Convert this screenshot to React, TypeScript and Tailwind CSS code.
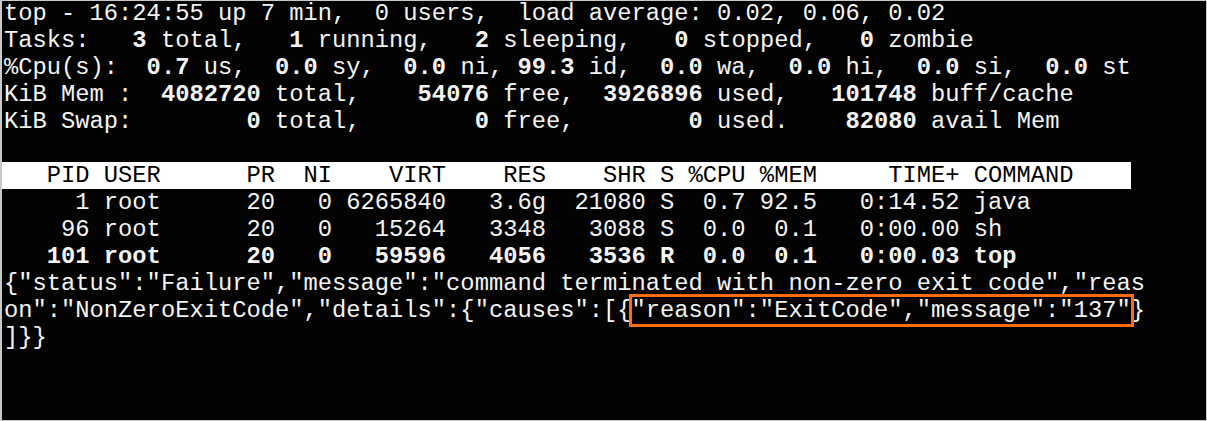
import React from "react";

type Seg = [string, boolean?];

const Line = ({ segs }: { segs: Seg[] }) => (
  <div className="whitespace-pre h-[27px]">
    {segs.map(([t, b], i) => (
      <span key={i} className={b ? "font-bold" : ""}>
        {t}
      </span>
    ))}
  </div>
);

export default function App() {
  return (
    <div className="w-[1207px] h-[421px] bg-[#030303] border border-l-2 border-[#c9c9c9] overflow-hidden">
      <div
        className="mt-[-1.5px] pl-[2px] text-[#f4f4f4] text-[23.78px] leading-[27px]"
        style={{ fontFamily: '"Liberation Mono", "Courier New", monospace' }}
      >
        <Line segs={[["top - 16:24:55 up 7 min,  0 users,  load average: 0.02, 0.06, 0.02"]]} />
        <Line
          segs={[
            ["Tasks:"],
            ["   3", true],
            [" total,"],
            ["   1", true],
            [" running,"],
            ["   2", true],
            [" sleeping,"],
            ["   0", true],
            [" stopped,"],
            ["   0", true],
            [" zombie"],
          ]}
        />
        <Line
          segs={[
            ["%Cpu(s):"],
            ["  0.7", true],
            [" us,"],
            ["  0.0", true],
            [" sy,"],
            ["  0.0", true],
            [" ni,"],
            [" 99.3", true],
            [" id,"],
            ["  0.0", true],
            [" wa,"],
            ["  0.0", true],
            [" hi,"],
            ["  0.0", true],
            [" si,"],
            ["  0.0", true],
            [" st"],
          ]}
        />
        <Line
          segs={[
            ["KiB Mem : "],
            [" 4082720", true],
            [" total,"],
            ["    54076", true],
            [" free,"],
            ["  3926896", true],
            [" used,"],
            ["   101748", true],
            [" buff/cache"],
          ]}
        />
        <Line
          segs={[
            ["KiB Swap: "],
            ["       0", true],
            [" total,"],
            ["        0", true],
            [" free,"],
            ["        0", true],
            [" used."],
            ["    82080", true],
            [" avail Mem"],
          ]}
        />
        <Line segs={[[" "]]} />
        <div className="whitespace-pre h-[27px] ml-[-2px] pl-[2px] w-[1129px] bg-white text-black">
          {"   PID USER      PR  NI    VIRT    RES    SHR S %CPU %MEM     TIME+ COMMAND"}
        </div>
        <Line segs={[["     1 root      20   0 6265840   3.6g  21080 S  0.7 92.5   0:14.52 java"]]} />
        <Line segs={[["    96 root      20   0   15264   3348   3088 S  0.0  0.1   0:00.00 sh"]]} />
        <Line segs={[["   101 root      20   0   59596   4056   3536 R  0.0  0.1   0:00.03 top", true]]} />
        <Line
          segs={[
            ['{"status":"Failure","message":"command terminated with non-zero exit code","reas'],
          ]}
        />
        <div className="whitespace-pre h-[27px]">
          {'on":"NonZeroExitCode","details":{"causes":[{'}
          <span className="outline-[3px] outline-solid outline-[#ff6b0f]">
            {'"reason":"ExitCode","message":"137"'}
          </span>
          {"}"}
        </div>
        <Line segs={[["]}}"]]} />
      </div>
    </div>
  );
}
